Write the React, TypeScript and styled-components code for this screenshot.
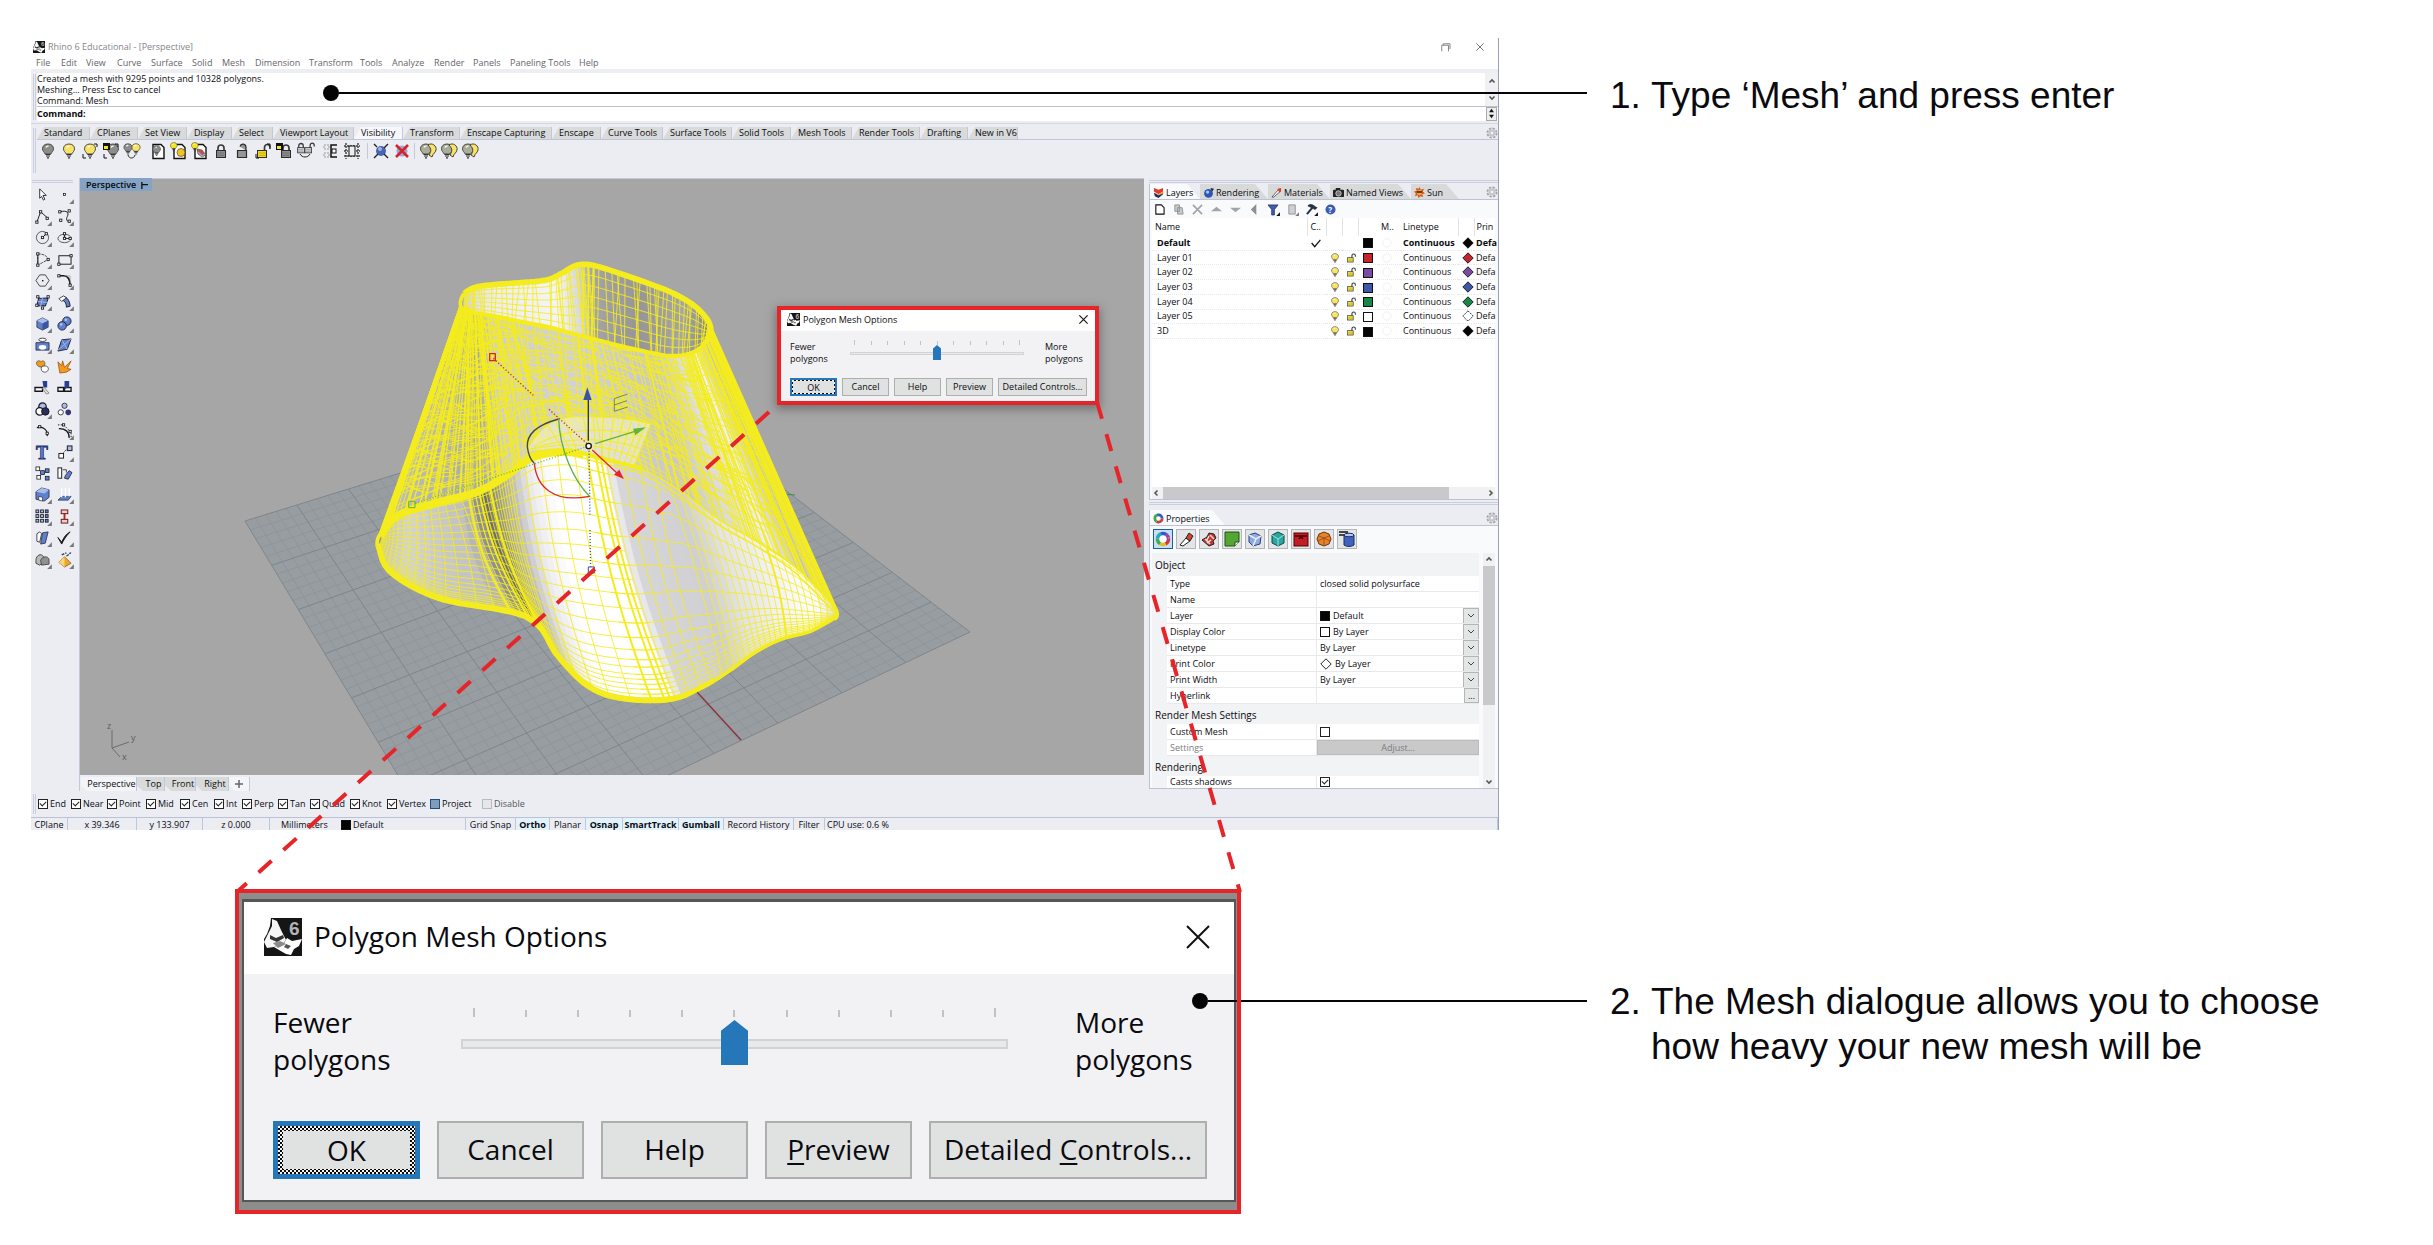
import React from "react";
import styled, { createGlobalStyle, css } from "styled-components";

const Global = createGlobalStyle`
  * { box-sizing: border-box; }
  body { margin: 0; background: #fff; color: #0a0a0f; font-family: "Open Sans", "Noto Sans", sans-serif; }
  button, input, select { font: inherit; color: inherit; margin: 0; }
  svg { display: block; }
`;

const RED = "#e5252a";
const LINE = "#bcc1d3";
const PANEL = "#ebedf3";
const YELLOW = "#f4ec1c";

/* ---------- page ---------- */

const Page = styled.main`
  position: relative;
  display: grid;
  grid-template-columns: minmax(0, 1468fr) minmax(0, 111fr) minmax(0, 792fr);
  grid-template-rows: auto auto;
  row-gap: 59px;
  padding: 38px 31px 29px;
`;

const Leader = styled.div<{ $row: number; $start: number; $top: number }>`
  grid-column: 1 / 3;
  grid-row: ${(p) => p.$row};
  align-self: start;
  z-index: 2;
  display: flex;
  align-items: center;
  margin: ${(p) => p.$top}px 23px 0 ${(p) => p.$start}px;
  pointer-events: none;
  &::before { content: ""; width: 16px; height: 16px; border-radius: 50%; background: #050505; }
  &::after { content: ""; flex: 1; height: 2px; background: #050505; }
`;

const Note = styled.section<{ $row: number; $top: number }>`
  grid-column: 3;
  grid-row: ${(p) => p.$row};
  display: grid;
  grid-template-columns: 41px minmax(0, 1fr);
  align-content: start;
  padding-top: ${(p) => p.$top}px;
  font-family: "Liberation Sans", Arial, sans-serif;
  font-size: 37px;
  line-height: 45px;
  p { margin: 0; max-width: 700px; }
`;

const Connectors = styled.svg`
  position: absolute;
  left: 0;
  top: 0;
  z-index: 3;
  pointer-events: none;
`;

/* ---------- application window ---------- */

const AppWindow = styled.section`
  grid-column: 1;
  grid-row: 1;
  display: flex;
  flex-direction: column;
  background: ${PANEL};
  font-size: 9px;
  line-height: 12px;
  white-space: nowrap;
  border-right: 1px solid #9ba1b5;
`;

const TitleBar = styled.header`
  display: flex;
  align-items: center;
  gap: 3px;
  height: 18px;
  padding: 0 10px 0 2px;
  background: #fff;
  color: #85858b;
  span { flex: 1; }
`;

const WindowButton = styled.button`
  width: 12px;
  height: 12px;
  margin-left: 20px;
  padding: 0;
  border: 0;
  background: none;
`;

const MenuBar = styled.nav`
  display: grid;
  grid-template-columns: 25px 25px 31px 34px 41px 30px 33px 54px 51px 32px 42px 39px 37px 69px auto;
  height: 17px;
  padding-left: 5px;
  background: #fff;
  border-bottom: 4px solid #eceef1;
  button { padding: 0; border: 0; background: none; text-align: left; color: #66646a; }
`;

const Grip = styled.div`
  width: 3px;
  margin: 1px 1px 1px 2px;
  border: solid #c9cede;
  border-width: 0 1px;
`;

const CommandArea = styled.div`
  display: flex;
  height: 51px;
  border-bottom: 1px solid #d3d7e4;
  padding-bottom: 2px;
`;

const CommandBody = styled.div`
  flex: 1;
  background: #fff;
`;

const History = styled.div`
  display: flex;
  height: 34px;
  line-height: 11px;
  border-bottom: 1px solid ${LINE};
  pre { flex: 1; margin: 0; font: inherit; }
`;

const ScrollColumn = styled.div`
  display: flex;
  flex-direction: column;
  justify-content: space-between;
  align-items: center;
  width: 13px;
  padding: 4px 0;
  background: #f1f1f3;
`;

const Prompt = styled.label`
  display: flex;
  align-items: center;
  height: 13px;
  font-weight: 700;
  input { flex: 1; height: 12px; border: 0; padding: 0 4px; outline: 0; background: none; }
`;

const Spinner = styled.span`
  display: grid;
  grid-template-rows: 6px 6px;
  place-items: center;
  width: 11px;
  margin-right: 1px;
  border: 1px solid #a9a9ad;
  background: #eee;
`;

const ToolArea = styled.div`
  display: flex;
  height: 54px;
  padding-top: 3px;
  padding-bottom: 4px;
`;

const ToolBody = styled.div`
  flex: 1;
`;

const TabStrip = styled.div`
  display: flex;
  height: 13px;
  border-bottom: 1px solid #bcc8da;
`;

const ToolTabs = styled.div`
  display: grid;
  flex: 1;
  grid-template-columns: 53px 48px 49px 45px 41px 81px 49px 57px 92px 49px 62px 69px 59px 61px 68px 48px 50px;
`;

const ToolTab = styled.button<{ $active?: boolean }>`
  padding: 0 0 0 7px;
  border: 0;
  border-right: 1px solid #c5c8d4;
  text-align: left;
  background: ${(p) => (p.$active ? "#f6f7fb" : "#d9dbdb")};
  clip-path: polygon(7px 0, 100% 0, 100% 100%, 0 100%);
`;

const IconBar = styled.div`
  display: flex;
  align-items: center;
  height: 22px;
`;

const IconGroup = styled.div<{ $rule?: boolean }>`
  display: flex;
  margin-right: 5px;
  ${(p) => p.$rule && css`
    margin-right: 2px;
    padding-left: 2px;
    border-left: 1px solid #c5c9d6;
  `}
`;

const IconButton = styled.button<{ $w: number }>`
  display: grid;
  place-items: center;
  width: ${(p) => p.$w}px;
  padding: 0;
  border: 0;
  background: none;
`;

const Workspace = styled.div`
  display: grid;
  grid-template-columns: 49px minmax(0, 1fr) 354px;
`;

const SideBar = styled.aside`
  padding: 2px 6px 0 1px;
  border-right: 1px solid #c3c7d8;
`;

const TopGrip = styled.div`
  height: 3px;
  margin-bottom: 1px;
  border: solid #c9cede;
  border-width: 1px 0;
`;

const SideTools = styled.div`
  display: grid;
  grid-template-columns: 22px 20px;
  grid-template-rows: repeat(18, 1fr);
  height: 386px;
`;

const ViewArea = styled.div`
  position: relative;
  min-width: 0;
`;

const Scene = styled.svg`
  width: 100%;
  height: 597px;
  border-top: 1px solid #c3c7d8;
  background: #a6a6a6;
`;

const ViewLabel = styled.button`
  position: absolute;
  left: 0;
  top: 0;
  display: flex;
  align-items: center;
  gap: 5px;
  height: 13px;
  padding: 1px 4px 0 6px;
  border: 0;
  background: #84a3c5;
  font-weight: 600;
`;

const FloatingDialog = styled.div`
  position: absolute;
  left: 697px;
  top: 128px;
  width: 322px;
  box-shadow: 0 3px 9px 1px rgba(60, 60, 60, 0.5);
`;

const ViewTabs = styled.div`
  display: grid;
  grid-template-columns: 56px 28px 31px 33px 21px;
  height: 16px;
  padding: 2px 0 0 1px;
`;

const ViewTab = styled.button<{ $active?: boolean }>`
  padding: 0 0 0 6px;
  border: 0;
  border-right: 1px solid #c5c8d4;
  text-align: center;
  background: ${(p) => (p.$active ? "#f4f5f9" : "#d9dbdb")};
  clip-path: polygon(0 0, 100% 0, 100% 100%, 6px 100%, 0 60%);
`;

const Snaps = styled.div`
  display: grid;
  grid-template-columns: 3px 33px 36px 39px 34px 34px 28px 36px 32px 40px 37px 43px 52px 50px;
  align-items: center;
  height: 26px;
  padding-left: 2px;
`;

const SnapGrip = styled.div`
  height: 20px;
  width: 3px;
  border: solid #c9cede;
  border-width: 0 1px;
`;

const SnapLabel = styled.label<{ $dim?: boolean }>`
  display: flex;
  align-items: center;
  gap: 2px;
  margin-left: 2px;
  color: ${(p) => (p.$dim ? "#55565c" : "#0a0a0f")};
`;

const Tick = styled.input<{ $fill?: string; $edge?: string }>`
  appearance: none;
  flex: none;
  width: 10px;
  height: 10px;
  border: 1px solid ${(p) => p.$edge || "#222"};
  background: ${(p) => p.$fill || "#fff"};
  &:checked::after {
    content: "";
    display: block;
    width: 5px;
    height: 3px;
    margin: 1px 0 0 1px;
    border: solid #222;
    border-width: 0 0 1px 1px;
    rotate: -45deg;
  }
`;

const Status = styled.footer`
  display: grid;
  grid-template-columns: 37px 69px 66px 67px 196px 50px 34px 36px 37px 56px 45px 70px 31px 1fr;
  border-top: 1px solid ${LINE};
`;

const StatusCell = styled.span<{ $on?: boolean; $left?: boolean }>`
  display: flex;
  align-items: center;
  gap: 2px;
  justify-content: ${(p) => (p.$left ? "flex-start" : "center")};
  padding: 1px 2px 0;
  border-right: 1px solid #bcc8e0;
  background: ${(p) => (p.$on ? "#e3f3fc" : "none")};
  font-weight: ${(p) => (p.$on ? 700 : 400)};
  line-height: 11px;
`;

const Swatch = styled.span<{ $c: string }>`
  display: inline-block;
  flex: none;
  width: 10px;
  height: 10px;
  border: 1px solid #111;
  background: ${(p) => p.$c};
  vertical-align: middle;
`;

const UnitCell = styled.span`
  width: 67px;
  padding-left: 9px;
`;

/* ---------- right panels ---------- */

const Panels = styled.aside`
  display: flex;
  flex-direction: column;
  padding: 2px 0 2px 5px;
`;

const Panel = styled.section<{ $grow?: boolean }>`
  display: flex;
  flex-direction: column;
  height: ${(p) => (p.$grow ? "auto" : "316px")};
  flex: ${(p) => (p.$grow ? "1" : "none")};
  min-height: 0;
  margin-top: ${(p) => (p.$grow ? 4 : 0)}px;
  margin-bottom: ${(p) => (p.$grow ? 0 : 2)}px;
  border-left: 1px solid ${LINE};
  border-bottom: 1px solid ${LINE};
  background: #f9fafc;
`;

const PanelTabs = styled.div<{ $cols: string }>`
  display: grid;
  grid-template-columns: ${(p) => p.$cols} 1fr 14px;
  align-items: stretch;
  height: 16px;
  border-bottom: 1px solid ${LINE};
  background: ${PANEL};
  > svg { align-self: center; justify-self: end; grid-column: -2; }
`;

const PanelTab = styled.button<{ $active?: boolean }>`
  display: flex;
  align-items: center;
  gap: 2px;
  padding: 2px 0 0 3px;
  border: 0;
  background: ${(p) => (p.$active ? "#f9fafc" : "#d8dada")};
  clip-path: polygon(0 0, calc(100% - 13px) 0, 100% 100%, 0 100%);
`;

const LayerTools = styled.div`
  display: grid;
  grid-template-columns: repeat(10, 19px);
  align-items: center;
  height: 18px;
`;

const TableWrap = styled.div`
  flex: 1;
  margin: 0 3px 0 2px;
  background: #fff;
`;

const LayerTable = styled.table`
  width: 100%;
  height: 121px;
  table-layout: fixed;
  border-collapse: collapse;
  th, td { padding: 0 0 0 3px; text-align: left; line-height: 12px; }
  th { height: 18px; font-weight: 400; border-left: 1px solid #e2e3e8; }
  th:first-child, th:nth-child(6), th:nth-child(7) { border-left: 0; }
  td { border-bottom: 1px dotted #e9e9ec; }
  td:first-child { padding-left: 5px; }
  th:last-child, td:last-child { padding-left: 2px; }
  tr.current td { font-weight: 700; }
  td:nth-child(5) { padding-left: 5px; }
  td svg { margin-left: 1px; }
`;

const HScroll = styled.div`
  display: grid;
  grid-template-columns: 11px 287fr 46fr;
  align-items: center;
  height: 12px;
  margin: 0 3px 0 2px;
  background: #f1f1f3;
  svg:last-child { justify-self: end; }
`;

const HThumb = styled.div`
  height: 12px;
  background: #c9c9cb;
`;

const PropIcons = styled.div`
  display: flex;
  gap: 3px;
  padding: 3px;
  height: 27px;
`;

const PropIcon = styled.button<{ $active?: boolean }>`
  display: grid;
  place-items: center;
  width: 20px;
  height: 20px;
  padding: 0;
  border: 1px solid ${(p) => (p.$active ? "#1a5fa0" : "#b4b5b8")};
  background: ${(p) => (p.$active ? "#c9dff2" : "#e4e5e6")};
`;

const PropBody = styled.div`
  display: flex;
  flex: 1;
  gap: 4px;
  height: 0;
  padding: 0 3px 0 2px;
`;

const PropList = styled.div`
  flex: 1;
  overflow: hidden;
  background: #f2f3f4;
`;

const PropHead = styled.h3<{ $h: number }>`
  margin: 0;
  padding-left: 3px;
  height: ${(p) => p.$h}px;
  font-size: 10px;
  font-weight: 400;
  line-height: ${(p) => p.$h + 2}px;
`;

const PropRow = styled.div<{ $dim?: boolean; $last?: boolean }>`
  display: grid;
  grid-template-columns: 149px minmax(0, 1fr);
  height: ${(p) => (p.$last ? 12 : 16)}px;
  margin-left: 15px;
  background: #fff;
  border-bottom: ${(p) => (p.$last ? 0 : 1)}px solid #e8e9ec;
  line-height: ${(p) => (p.$last ? 12 : 15)}px;
  color: ${(p) => (p.$dim ? "#7c7c80" : "inherit")};
  > label, > span:first-child { padding-left: 3px; }
`;

const PropValue = styled.span`
  position: relative;
  display: flex;
  align-items: center;
  gap: 3px;
  padding-left: 3px;
  border-left: 1px solid #e8e9ec;
  input[type="text"] { flex: 1; min-width: 0; height: 14px; padding: 0; border: 0; outline: 0; background: none; }
  select { flex: 1; appearance: none; height: 15px; padding: 0; border: 0; background: none; }
  select + svg { position: absolute; right: 0; top: 0; pointer-events: none; }
`;

const DotsButton = styled.button`
  width: 15px;
  height: 15px;
  padding: 0;
  border: 1px solid #b4b5b8;
  background: #e6e7e7;
  line-height: 9px;
`;

const AdjustButton = styled.button`
  flex: 1;
  height: 15px;
  margin-left: -3px;
  padding: 0;
  border: 1px solid #bcbcbe;
  background: #c9c9c9;
  color: #7c7c80;
  line-height: 12px;
`;

const VScroll = styled.div`
  display: flex;
  flex-direction: column;
  align-items: center;
  width: 12px;
  padding: 2px 0;
  background: #f1f1f3;
  div { width: 12px; height: 139px; margin: 3px 0 auto; background: #c9c9cb; }
`;

/* ---------- mesh dialog ---------- */

interface Size {
  font: number; line: number; titleH: number; titlePad: number; closePad: number; lift: number; titleGap: number; logo: number;
  padTop: number; padL: number; padR: number; padB: number; labelW: number; moreGap: number; moreW: number;
  ticksH: number; tickPad: number; tickW: number; tickH: number; tickGap: number; inputH: number;
  trackH: number; edge: number; thumbW: number; thumbH: number; thumbUp: number;
  btnTop: number; btnH: number; btnW: number; btnGap: number; ring: number; focus: number; closeSize: number; shade: string; outline: string;
}

const LARGE: Size = {
  font: 28, line: 37, titleH: 72, titlePad: 20, closePad: 24, lift: 3, titleGap: 12, logo: 38,
  padTop: 30, padL: 29, padR: 27, padB: 21, labelW: 188, moreGap: 67, moreW: 132,
  ticksH: 13, tickPad: 12, tickW: 2, tickH: 7, tickGap: 3, inputH: 48,
  trackH: 10, edge: 2, thumbW: 27, thumbH: 45, thumbUp: 21,
  btnTop: 43, btnH: 58, btnW: 147, btnGap: 17, ring: 5, focus: 5, closeSize: 24,
  shade: "6px 1px 8px 3px", outline: "3px 2px 2px",
};

const SMALL: Size = {
  font: 9, line: 12, titleH: 21, titlePad: 6, closePad: 7, lift: 2, titleGap: 3, logo: 13,
  padTop: 10, padL: 9, padR: 8, padB: 5, labelW: 60, moreGap: 21, moreW: 42,
  ticksH: 4, tickPad: 4, tickW: 1, tickH: 4, tickGap: 0, inputH: 17,
  trackH: 3, edge: 1, thumbW: 8, thumbH: 15, thumbUp: 8,
  btnTop: 13, btnH: 18, btnW: 47, btnGap: 5, ring: 2, focus: 1, closeSize: 9,
  shade: "0", outline: "0",
};

const Frame = styled.div`
  position: relative;
  padding: 4px;
  &::after {
    content: "";
    position: absolute;
    inset: 0;
    z-index: 3;
    border: 4px solid ${RED};
    pointer-events: none;
  }
`;

const Shade = styled.div<{ $s: Size }>`
  padding: ${(p) => p.$s.shade};
  background: #8d8d8c;
`;

const DialogBox = styled.div<{ $s: Size }>`
  border: solid #555657;
  border-width: ${(p) => p.$s.outline};
  background: #f2f2f4;
  font-size: ${(p) => p.$s.font}px;
  line-height: ${(p) => p.$s.line}px;
  white-space: nowrap;
`;

const DialogTitle = styled.header<{ $s: Size }>`
  display: flex;
  align-items: center;
  gap: ${(p) => p.$s.titleGap}px;
  height: ${(p) => p.$s.titleH}px;
  padding: 0 ${(p) => p.$s.closePad}px ${(p) => p.$s.lift}px ${(p) => p.$s.titlePad}px;
  background: #fff;
  span { flex: 1; }
  button { padding: 0; border: 0; background: none; }
`;

const DialogBody = styled.div<{ $s: Size }>`
  padding: ${(p) => `${p.$s.padTop}px ${p.$s.padR}px ${p.$s.padB}px ${p.$s.padL}px`};
`;

const SliderRow = styled.div<{ $s: Size }>`
  display: grid;
  grid-template-columns: ${(p) => p.$s.labelW}px minmax(0, 1fr) ${(p) => p.$s.moreW}px;
  label, > span { white-space: pre-line; }
  > div { margin-right: ${(p) => p.$s.moreGap}px; }
`;

const Ticks = styled.div<{ $s: Size }>`
  display: flex;
  justify-content: space-between;
  align-items: flex-end;
  height: ${(p) => p.$s.ticksH}px;
  margin-bottom: ${(p) => p.$s.tickGap}px;
  padding: 0 ${(p) => p.$s.tickPad}px;
  i { width: ${(p) => p.$s.tickW}px; height: ${(p) => p.$s.tickH}px; background: #c2c2c5; }
  i:first-child, i:last-child { height: ${(p) => p.$s.tickH + p.$s.edge}px; }
`;

const Range = styled.input<{ $s: Size }>`
  display: block;
  appearance: none;
  width: 100%;
  height: ${(p) => p.$s.inputH}px;
  background: none;
  &::-webkit-slider-runnable-track {
    height: ${(p) => p.$s.trackH}px;
    border: ${(p) => p.$s.edge}px solid #d2d3d5;
    background: #e8e9ea;
  }
  &::-webkit-slider-thumb {
    appearance: none;
    width: ${(p) => p.$s.thumbW}px;
    height: ${(p) => p.$s.thumbH}px;
    margin-top: -${(p) => p.$s.thumbUp}px;
    background: #2676ba;
    clip-path: polygon(50% 0, 100% 24%, 100% 100%, 0 100%, 0 24%);
  }
`;

const Buttons = styled.div<{ $s: Size }>`
  display: flex;
  gap: ${(p) => p.$s.btnGap}px;
  margin-top: ${(p) => p.$s.btnTop}px;
`;

const DialogButton = styled.button<{ $s: Size; $main?: boolean; $wide?: boolean }>`
  flex: ${(p) => (p.$wide ? "1" : "none")};
  width: ${(p) => p.$s.btnW}px;
  height: ${(p) => p.$s.btnH}px;
  padding: 0 0 ${(p) => p.$s.lift}px;
  border: ${(p) => p.$s.edge}px solid #adaeae;
  background: #e0e2e1;
  line-height: 1;
  u { text-underline-offset: 3px; text-decoration-thickness: 2px; }
  ${(p) => p.$main && css`
    border: ${p.$s.ring}px solid #2676ba;
    padding: ${p.$s.focus}px;
    background:
      linear-gradient(#e0e2e1, #e0e2e1) content-box,
      repeating-conic-gradient(#0a0a0a 0 25%, #f4f4f4 0 50%) 0 0 / 4px 4px padding-box;
  `}
`;

const Magnified = styled.section`
  grid-column: 1;
  grid-row: 2;
  width: 1006px;
  margin-left: 204px;
`;

/* ---------- drawings ---------- */

const Rhino = ({ size }: { size: number }) => (
  <svg width={size} height={size} viewBox="0 0 38 38" aria-hidden="true">
    <rect width="38" height="38" fill="#151515" />
    <path d="M0 0h7l-1 8-3 8-3 5z" fill="#fff" />
    <path d="M8 1l5 2 4 9 3 6 2 4-4 5-8 2-7 1-3-6 4-8 4-8z" fill="#f6f6f6" />
    <path d="M19 27l4-7 5 3 10-2-3 7-5 3-3 6-5-1-7-4-5-3z" fill="#fff" />
    <path d="M6 17l6 3 7-3 1 3-7 4-7-3z" fill="#333" />
    <path d="M9 25l7-2 6 3-8 4z" fill="#8a8a8a" />
    <path d="M22 26l5 2-3 3-4-2z" fill="#555" />
    <text x="25" y="17" fontSize="19" fontWeight="700" fill="#b4b4b4" fontFamily="Liberation Sans, sans-serif">6</text>
  </svg>
);

const Cross = ({ size, color = "#111" }: { size: number; color?: string }) => (
  <svg width={size} height={size} viewBox="0 0 24 24" aria-hidden="true">
    <path d="M1 1l22 22M23 1L1 23" stroke={color} strokeWidth={size > 12 ? 2 : 3} />
  </svg>
);

const Chevron = ({ dir, color = "#555" }: { dir: "up" | "down" | "left" | "right"; color?: string }) => {
  const turn = { up: 0, right: 90, down: 180, left: 270 }[dir];
  return (
    <svg width="8" height="8" viewBox="0 0 8 8" aria-hidden="true">
      <path d="M1.500 5.500L4 3l2.500 2.500" transform={`rotate(${turn} 4 4)`} fill="none" stroke={color} strokeWidth="1.600" />
    </svg>
  );
};

const Gear = () => (
  <svg width="12" height="12" viewBox="0 0 12 12" aria-hidden="true">
    <circle cx="6" cy="6" r="4.600" fill="none" stroke="#a5a6aa" strokeWidth="1.800" strokeDasharray="2.400 1.200" />
    <circle cx="6" cy="6" r="3.600" fill="#c6c7ca" />
    <circle cx="6" cy="6" r="1.300" fill="#f5f5f7" />
  </svg>
);

const bulbPath = "M8 1c-3.500 0-5.500 2-5.500 4.800 0 2.400 1.900 3.400 2.700 5.200h5.600c.8-1.800 2.700-2.800 2.700-5.200C13.500 3 11.500 1 8 1z";
const Bulb = ({ c, x = 0, y = 0, k = 1 }: { c: string; x?: number; y?: number; k?: number }) => (
  <g transform={`translate(${x} ${y}) scale(${k})`}>
    <path d={bulbPath} fill={c} stroke="#4e4a3c" strokeWidth="1" />
    <path d="M6 4.500c.5-1 1.500-1.500 2.500-1.300" stroke="#fff" strokeWidth="1.400" fill="none" />
    <path d="M5.500 11.500h5M6 13h4M7 14.800h2" stroke="#333" strokeWidth="1.200" />
  </g>
);
const Lock = ({ c, open, x = 0, y = 0, k = 1 }: { c: string; open?: boolean; x?: number; y?: number; k?: number }) => (
  <g transform={`translate(${x} ${y}) scale(${k})`}>
    <path d={open ? "M9.500 8V4.500c0-4 5.500-4 5.500 0V6" : "M5 8V5c0-4 6-4 6 0v3"} fill="none" stroke="#3a3a3a" strokeWidth="1.700" />
    <rect x={open ? 2.5 : 3.5} y="7.500" width="9" height="7" fill={c} stroke="#2b2b2b" />
    <path d="M4 10h7M4 12.300h7" stroke="#0003" />
  </g>
);
const Corners = () => <path d="M1 11v4h3M12 1h3v3" fill="none" stroke="#111" />;
const Doc = () => <path d="M3 1.500h8l3 3v11H3z" fill="#fff" stroke="#111" strokeWidth="1.400" />;

const GOLD = "#f8e268";
const GREY = "#8b8d8c";

const toolIcons: React.ReactNode[][] = [
  [
    <Bulb c={GREY} />,
    <Bulb c={GOLD} />,
    <><Bulb c={GOLD} /><Corners /></>,
    <><Bulb c={GREY} x={2} /><rect x="0" y="0" width="7" height="7" fill="#111" /><rect x="1" y="3" width="4" height="3" fill="#f5e61a" /><Corners /></>,
    <><Bulb c={GREY} x={-2} k={0.75} /><Bulb c={GOLD} x={6} k={0.75} /><path d="M4 12c1 4 6 4 7 0" fill="none" stroke="#222" /></>,
  ],
  [
    <><Doc /><Bulb c={GREY} x={1} y={2} k={0.7} /></>,
    <><Doc /><Bulb c="#f5e61a" x={-2} y={-1} k={0.6} /><circle cx="10" cy="9.500" r="4" fill="#efc22e" stroke="#5b4a10" strokeWidth=".7" /></>,
    <><Doc /><Bulb c="#f5e61a" x={-2} y={-1} k={0.6} /><path d="M5 6l5 1 4 5-4 2-4-3z" fill="#c6504a" stroke="#552" strokeWidth=".7" /><path d="M6 9l4 4 3-2" stroke="#8fa8e0" fill="none" strokeWidth="1.500" /></>,
    <Lock c={GREY} />,
    <path d="M3.500 7.500h9v7h-9zM6 3.500C7 0 12 .5 12 4.500v3" fill={GREY} fillOpacity=".9" stroke="#2b2b2b" strokeWidth="1.200" />,
    <><Lock c="#f5d81e" open /><Corners /></>,
    <><Lock c={GREY} x={2} /><rect width="7" height="7" fill="#111" /><rect x="1" y="3" width="4" height="3" fill="#f5e61a" /></>,
    <><Lock c="#c9cbca" x={-2} y={-1} k={0.75} /><Lock c="#c9cbca" open x={6} y={-1} k={0.75} /><path d="M3 11c2 4 8 4 10 0" fill="none" stroke="#222" /></>,
  ],
  [
    <><path d="M1 2h5v4H1zM1 10h5v4H1z" fill="none" stroke="#999" strokeDasharray="2 1" /><path d="M14 2H8v12h6" fill="none" stroke="#111" strokeWidth="1.500" /><rect x="9" y="6" width="4" height="4" fill="#fff" stroke="#111" /></>,
    <><path d="M0 3h16M0 13h16M2 0v16M14 0v16M0 8h4M12 8h4" stroke="#444" strokeDasharray="2 1" strokeWidth="1.500" /><rect x="5" y="3" width="6" height="10" fill="#eee" stroke="#111" /></>,
  ],
  [
    <><circle cx="8" cy="8" r="5" fill="#4964b0" /><circle cx="7" cy="6" r="2" fill="#9db0e6" /><path d="M1 15l4-4M15 1l-4 4M1 1l3 3M15 15l-4-4" stroke="#222" strokeWidth="1.400" /></>,
    <><circle cx="8" cy="8" r="5.500" fill="#9aa8d6" /><path d="M2 2l12 12M14 2L2 14" stroke="#d6222a" strokeWidth="2.600" /></>,
  ],
  [0, 1, 2].map((n) => (
    <React.Fragment key={n}><Bulb c="#a9ad9a" x={-2} k={1} /><path d="M8 2c4-3 9 1 8 5-.5 3-3 3-4 7l-3-2c2-3 3-6-1-10z" fill={GOLD} stroke="#333" strokeWidth=".9" /></React.Fragment>
  )),
];

const BLUE = "#5f7fcf";
const PALE = "#a9bcea";
const INK = "#16161c";
const dot = (x: number, y: number) => <rect x={x - 1.2} y={y - 1.2} width="2.400" height="2.400" fill="#fff" stroke={INK} strokeWidth=".9" />;

const sideIcons: [React.ReactNode, boolean][] = [
  [<path d="M5 2l7 7H8.500l2 4-1.500 1-2-4-2 2z" fill="#fff" stroke={INK} strokeWidth=".9" />, false],
  [<rect x="7" y="7" width="2" height="2" fill="#fff" stroke={INK} strokeWidth=".8" />, true],
  [<><path d="M2 14L6 3l8 7" fill="none" stroke={INK} />{dot(2, 14)}{dot(6, 3)}{dot(13, 10)}</>, true],
  [<><path d="M3 3c8-2 10 1 8 5s0 5 3 6" fill="none" stroke={INK} />{dot(3, 3)}{dot(13, 2)}{dot(4, 12)}{dot(13, 13)}</>, true],
  [<><circle cx="8" cy="8" r="6.500" fill="none" stroke="#555" /><path d="M8 8l4-4" stroke={INK} />{dot(8, 8)}{dot(12, 4)}</>, true],
  [<><ellipse cx="8" cy="9" rx="7" ry="4.500" fill="none" stroke="#555" /><path d="M8 9V4M8 9h6" stroke={INK} />{dot(8, 9)}{dot(8, 4)}{dot(14, 9)}</>, true],
  [<><path d="M3 2c6 0 10 2 11 6L3 14z" fill="none" stroke="#444" strokeDasharray="3 1" /><path d="M3 2v12" stroke={INK} />{dot(3, 2)}{dot(3, 14)}{dot(14, 8)}</>, true],
  [<><rect x="2" y="4" width="13" height="9" fill="none" stroke={INK} />{dot(2, 13)}{dot(15, 4)}</>, true],
  [<><path d="M5 2h6l4 6-4 6H5L1 8z" fill="none" stroke="#444" /><rect x="7.500" y="7.500" width="1.500" height="1.500" /></>, true],
  [<><path d="M2 3h5c5 0 7 4 7 11" fill="none" stroke={INK} strokeWidth="1.700" />{dot(2, 3)}<path d="M8 3h6v6" fill="none" stroke="#888" strokeWidth=".6" />{dot(14, 13)}</>, true],
  [<><path d="M4 4c3 2 6-1 10 1l-3 8c-4-2-6 1-9-1z" fill={BLUE} stroke={INK} /><path d="M8 4l-2 9M3 8l10 1" stroke={PALE} />{dot(3, 3)}{dot(14, 3)}{dot(2, 12)}{dot(8, 15)}</>, true],
  [<><path d="M4 6c3-5 9-3 10 7l-4 1c0-5-2-7-6-8z" fill={BLUE} stroke={INK} /><path d="M2 5l5-3 3 2-5 4z" fill="#fff" stroke={INK} strokeWidth=".8" /></>, true],
  [<><path d="M2 5l6-3 6 3v7l-6 3-6-3z" fill={BLUE} stroke="#233" strokeWidth=".8" /><path d="M2 5l6 3 6-3-6-3z" fill={PALE} /><path d="M8 8v7l6-3V5z" fill="#3b559f" /></>, true],
  [<><circle cx="10.500" cy="5.500" r="4.500" fill={BLUE} stroke="#223" /><circle cx="5.500" cy="10.500" r="4.500" fill={BLUE} stroke="#223" /><circle cx="4.500" cy="9" r="1.500" fill={PALE} /><circle cx="9.500" cy="4" r="1.500" fill={PALE} /></>, true],
  [<><path d="M1 6h14v8H1z" fill={BLUE} stroke="#223" strokeWidth=".8" /><ellipse cx="8" cy="3" rx="4" ry="1.800" fill="#fff" stroke={INK} strokeWidth=".8" /><ellipse cx="8" cy="11" rx="4" ry="2.500" fill="#fff" /></>, true],
  [<><path d="M5 3l10-1-4 11-10 2z" fill={BLUE} stroke="#223" /><path d="M5 3l3 5M15 2L8 8l3 5M8 8l-7 6" stroke={PALE} fill="none" /></>, true],
  [<><path d="M2 3c2-3 4 1 6-1 3 0 3 3 2 5s-4 2-6 1-3-3-2-5z" fill="#f39a1c" stroke="#553" strokeWidth=".8" /><path d="M7 8c3-1 5-1 7 1 1 3-1 5-4 5s-4-3-3-6z" fill="#fff" stroke="#333" strokeWidth=".8" /></>, false],
  [<path d="M1 3l4 4 1-5 2 7 7-7-4 8 4 1-5 3-7 1z" fill="#f39a1c" stroke="#9a4d0c" strokeWidth=".8" />, false],
  [<><path d="M0 8h8v4H0z" fill="#fff" stroke={INK} strokeWidth="1.400" /><path d="M8 1h5v7H9z" fill="#27408f" /><path d="M10 8l5 6-3 1-4-6z" fill="#ddd" stroke="#777" strokeWidth=".8" /></>, false],
  [<><path d="M1 8h6v4H1zM8 8h7v4H8z" fill="#fff" stroke={INK} strokeWidth="1.400" /><path d="M8 1h5v6l-5 3z" fill="#27408f" /></>, false],
  [<><circle cx="8" cy="5" r="4" fill={PALE} stroke={INK} strokeWidth="1.300" /><circle cx="5" cy="10" r="4" fill="#fff" stroke={INK} strokeWidth="1.300" /><circle cx="11" cy="10" r="4" fill="#2b2b5c" stroke={INK} /></>, true],
  [<><circle cx="8" cy="4" r="2.800" fill={PALE} stroke={INK} strokeWidth=".8" /><circle cx="4" cy="11" r="2.800" fill="#fff" stroke={INK} strokeWidth=".8" /><circle cx="12" cy="11" r="3" fill="#33337a" /></>, false],
  [<><path d="M2 5c7-2 12 3 11 9" fill="none" stroke={INK} strokeWidth="1.300" />{dot(5, 4)}{dot(13, 11)}</>, false],
  [<><path d="M2 6c7 0 11 3 11 10" fill="none" stroke={INK} strokeWidth="1.300" /><path d="M1 2h6l8 8v5" fill="none" stroke={INK} strokeDasharray="1.500 1.500" />{dot(7, 2)}{dot(14, 9)}</>, true],
  [<text x="1" y="15" fontSize="19" fontWeight="700" fontFamily="Liberation Serif, serif" fill={BLUE} stroke="#24376e" strokeWidth=".9">T</text>, false],
  [<><rect x="2" y="9" width="5" height="5" fill="#fff" stroke={INK} /><rect x="11" y="1" width="5" height="5" fill={PALE} stroke={INK} /><path d="M7 8l4-4" stroke={INK} strokeDasharray="1.500 1" /></>, true],
  [<>{[[1, 1], [6, 5], [11, 3], [2, 10], [11, 11]].map(([x, y]) => <rect key={`${x}-${y}`} x={x} y={y} width="4" height="4" fill={x > 3 ? BLUE : "#fff"} stroke={INK} strokeWidth=".8" />)}</>, false],
  [<><rect x="1" y="2" width="4" height="11" fill="#fff" stroke={INK} /><path d="M9 10l4-5 3 2-4 7-4-1z" fill={BLUE} stroke={INK} strokeWidth=".8" /><path d="M6 4h4v3" fill="none" stroke={INK} strokeWidth=".8" /></>, false],
  [<><path d="M1 5l6-4 8 2v8l-5 4-9-2z" fill={BLUE} stroke="#223" strokeWidth=".8" /><path d="M1 5l6-4 8 2-5 4z" fill={PALE} /><path d="M4 10l4 1v4l-4-1z" fill="#fff" stroke={INK} strokeWidth=".6" /></>, true],
  [<><path d="M1 14l4-4h10l-3 4z" fill={BLUE} stroke="#223" strokeWidth=".7" /><path d="M5 1v10M9 1v10M13 1v9" stroke="#fff" strokeWidth="1.400" /></>, true],
  [<>{[1, 6, 11].flatMap((y) => [1, 6, 11].map((x) => <rect key={`${x}-${y}`} x={x} y={y} width="3" height="3" fill={x === 11 ? BLUE : PALE} stroke={INK} strokeWidth=".9" />))}</>, true],
  [<><path d="M8 4v9" stroke="#b22" strokeWidth="2" /><rect x="4.500" y="1" width="7" height="4" fill="#f1caca" stroke="#611" /><rect x="4.500" y="11" width="7" height="4" fill="#f1caca" stroke="#611" /></>, true],
  [<><path d="M2 4l3-2 2 2-2 9-3-1z" fill="#fff" stroke={INK} strokeWidth=".8" /><path d="M8 3l6-1-3 12-5 1z" fill={BLUE} stroke="#223" strokeWidth=".8" /></>, true],
  [<path d="M1 8l4 5C7 8 10 4 14 2 9 7 7 11 5 15z" fill={INK} stroke={INK} />, true],
  [<><path d="M1 9c0-6 6-8 8-4v6l-4 3-4-2z" fill="#b7b8b8" stroke="#444" /><path d="M6 9c2-5 8-5 9-1v5l-8 1z" fill="#8f9190" stroke="#333" strokeWidth=".8" /></>, true],
  [<><path d="M8 5l7 7-7 4-6-5z" fill="#f0a52c" stroke="#6b4a10" strokeWidth=".7" /><path d="M8 5v11l-6-5z" fill="#f9d67a" /><path d="M5 3l5-2M10 4c3 0 2-3 5-3" fill="none" stroke="#445" strokeWidth="1.500" strokeDasharray="3 1" /></>, true],
];

/* ---------- scene geometry ---------- */

type P = [number, number];

const spline = (pts: P[], t: number): P => {
  const n = pts.length - 1;
  const f = Math.min(Math.max(t, 0), 0.9999) * n;
  const i = Math.floor(f);
  const u = f - i;
  const a = pts[Math.max(i - 1, 0)], b = pts[i], c = pts[i + 1], d = pts[Math.min(i + 2, n)];
  const h = (k: 0 | 1) =>
    0.5 * (2 * b[k] + (c[k] - a[k]) * u + (2 * a[k] - 5 * b[k] + 4 * c[k] - d[k]) * u * u + (3 * b[k] - a[k] - 3 * c[k] + d[k]) * u * u * u);
  return [h(0), h(1)];
};
const mix = (a: P, b: P, s: number): P => [a[0] + (b[0] - a[0]) * s, a[1] + (b[1] - a[1]) * s];
const pt = (p: P) => `${p[0].toFixed(1)} ${p[1].toFixed(1)}`;
const poly = (ps: P[]) => "M" + ps.map(pt).join("L");
const range = (n: number) => Array.from({ length: n + 1 }, (_, i) => i / n);
const curve = (pts: P[], n = 70) => range(n).map((t) => spline(pts, t));

const TOP: P[] = [[302, 160], [308, 172], [322, 182], [342, 188], [390, 198], [470, 213], [560, 232], [680, 262], [760, 284], [860, 306], [930, 318], [990, 311], [1030, 285], [1052, 240]];
const BASE: P[] = [[62, 850], [110, 792], [220, 755], [350, 720], [440, 670], [520, 615], [620, 600], [720, 625], [850, 660], [960, 722], [1080, 810], [1200, 880], [1310, 955], [1424, 1070]];
const FOOT: P[] = [[52, 890], [90, 970], [240, 1050], [500, 1105], [590, 1220], [680, 1310], [780, 1348], [930, 1352], [1030, 1312], [1110, 1262], [1190, 1205], [1265, 1168], [1350, 1145], [1424, 1105]];
const REAR: P[] = [[312, 130], [345, 112], [400, 104], [480, 98], [560, 90], [605, 70], [650, 46], [700, 46], [790, 74], [870, 102], [940, 130], [1000, 165], [1042, 208], [1054, 240]];
const RIMF: P[] = [[310, 172], [345, 188], [400, 198], [480, 215], [560, 230], [620, 246], [670, 260], [710, 270], [790, 290], [870, 308], [930, 318], [990, 311], [1030, 285], [1052, 240]];

let seed = 7;
const rnd = () => {
  seed = (seed * 16807) % 2147483647;
  return seed / 2147483647;
};

const upperFine = (() => {
  const out: string[] = [];
  for (let i = 0; i < 104; i++) {
    const t = i / 104 + (rnd() - 0.5) * 0.01;
    out.push(poly([spline(TOP, t), spline(BASE, t + (rnd() - 0.5) * 0.04)]));
  }
  for (let i = 0; i < 54; i++) {
    const t = rnd() * 0.42;
    out.push(poly([spline(TOP, t * 0.9), spline(BASE, t + (rnd() - 0.5) * 0.09)]));
  }
  for (let i = 0; i < 40; i++) {
    const t = 0.82 + rnd() * 0.18;
    out.push(poly([spline(TOP, t), spline(BASE, t + (rnd() - 0.5) * 0.06)]));
  }
  for (let k = 1; k < 46; k++) {
    const s = k / 46;
    if (k % 3 === 0) out.push(poly(range(60).map((t) => mix(spline(TOP, t), spline(BASE, t), s + 0.02 * Math.sin(t * 14 + k)))));
    else out.push(poly(range(30).map((v) => mix(spline(TOP, v * 0.34), spline(BASE, v * 0.34), s + 0.02 * Math.sin(v * 9 + k)))));
  }
  for (let i = 0; i < 600; i++) {
    const t = Math.pow(rnd(), 1.4) * 0.92, s = rnd() * 0.9;
    const a = mix(spline(TOP, t), spline(BASE, t), s);
    const b = mix(spline(TOP, t + 0.05), spline(BASE, t + 0.05), s + (rnd() - 0.3) * 0.12);
    out.push(poly([a, b]));
  }
  return out.join("");
})();

const upperBold = [0.06, 0.2, 0.24, 0.27, 0.52, 0.55, 0.69, 0.93, 0.97].map((t) => poly([spline(TOP, t), spline(BASE, t)])).join("");

const wall = (t: number, s: number): P => {
  const p = mix(spline(BASE, t), spline(FOOT, t), s);
  const bow = Math.sin(Math.PI * s);
  return [p[0] - (t < 0.65 && t > 0.2 ? 22 * bow : -8 * bow), p[1]];
};
const lowerFine = (() => {
  const out: string[] = [];
  const cols = [
    ...range(18).map((v) => v * 0.24),
    ...range(14).map((v) => 0.22 + v * 0.1),
    0.36, 0.4, 0.44, 0.48, 0.51, 0.55, 0.58, 0.61, 0.64, 0.67,
    ...range(20).map((v) => 0.69 + v * 0.31),
  ];
  cols.forEach((t) => out.push(poly(range(16).map((s) => wall(t, s)))));
  const rows = [0.06, 0.12, 0.18, 0.25, 0.32, 0.38, 0.44, 0.5, 0.56, 0.62, 0.68, 0.74, 0.79, 0.83, 0.86, 0.89, 0.91, 0.93, 0.95, 0.97, 0.985];
  rows.forEach((s, i) => {
    out.push(poly(range(40).map((v) => wall(v * 0.55, s))));
    if (i % 2 === 0 || i > 10) out.push(poly(range(40).map((v) => wall(0.5 + v * 0.5, s))));
  });
  return out.join("");
})();
const lowerBold = [0.215, 0.235, 0.26, 0.51, 0.53, 0.54, 0.86].map((t) => poly(range(16).map((s) => wall(t, s)))).join("");

const mouthFine = (() => {
  const out: string[] = [];
  for (let i = 0; i < 84; i++) {
    const t = i / 84 + (rnd() - 0.5) * 0.012;
    if (rnd() > 0.2) out.push(poly([spline(REAR, t), spline(RIMF, t + (rnd() - 0.5) * 0.03)]));
  }
  for (let k = 1; k < 7; k++) out.push(poly(range(50).map((t) => mix(spline(REAR, t), spline(RIMF, t), k / 7))));
  return out.join("");
})();

const strips = (a: P[], b: P[], shade: (t: number) => number, bent?: boolean) =>
  Array.from({ length: 64 }, (_, i) => {
    const t0 = i / 64, t1 = (i + 1.15) / 64;
    const g = Math.round(shade(t0));
    const d = bent
      ? poly([...range(10).map((s) => wall(t0, s)), ...range(10).reverse().map((s) => wall(t1, s))])
      : poly([spline(a, t0), spline(a, t1), spline(b, t1), spline(b, t0)]);
    return <path key={i} d={d + "Z"} fill={`rgb(${g},${g},${Math.min(g + 3, 255)})`} />;
  });

const ramp = (stops: [number, number][]) => (t: number) => {
  for (let i = 1; i < stops.length; i++) {
    if (t <= stops[i][0]) {
      const [t0, v0] = stops[i - 1], [t1, v1] = stops[i];
      return v0 + ((v1 - v0) * (t - t0)) / (t1 - t0);
    }
  }
  return stops[stops.length - 1][1];
};
const upperShade = ramp([[0, 195], [0.15, 178], [0.24, 168], [0.3, 208], [0.5, 210], [0.7, 200], [0.86, 240], [0.93, 195], [1, 205]]);
const lowerShade = ramp([[0, 190], [0.1, 212], [0.2, 190], [0.235, 105], [0.28, 165], [0.36, 235], [0.42, 255], [0.53, 255], [0.56, 214], [0.68, 208], [0.75, 228], [0.87, 246], [0.93, 255], [1, 215]]);
const mouthShade = ramp([[0, 210], [0.15, 238], [0.35, 245], [0.46, 215], [0.52, 165], [0.65, 150], [0.8, 165], [0.9, 140], [1, 90]]);

const gA: P = [245, 521], gB: P = [659, 393], gC: P = [970, 632], gD: P = [458, 875];
const ground = (major: boolean) =>
  Array.from({ length: 41 }, (_, i) => i)
    .filter((i) => (i % 5 === 0) === major)
    .map((i) => {
      const s = i / 40;
      return poly([mix(gA, gB, s), mix(gD, gC, s)]) + poly([mix(gA, gD, s), mix(gB, gC, s)]);
    })
    .join("");

const Model = () => (
  <Scene viewBox="80 179 1064 596" preserveAspectRatio="xMinYMin slice" role="img" aria-label="Perspective viewport">
    <path d={poly([gA, gB, gC, gD]) + "Z"} fill="#979da1" />
    <path d={ground(false)} stroke="#8f9599" strokeWidth="1" fill="none" />
    <path d={ground(true)} stroke="#7f868b" strokeWidth="1" fill="none" />
    <path d="M697 692l44 48" stroke="#8d3440" strokeWidth="1.500" />
    <path d="M785 494l10 1" stroke="#3f8f50" strokeWidth="1" />
    <g transform="translate(360 250) scale(.3333)" fill="none" strokeLinejoin="round">
      {strips(REAR, RIMF, mouthShade)}
      {strips(TOP, BASE, upperShade)}
      {strips(BASE, FOOT, lowerShade, true)}
      <path d={mouthFine} stroke={YELLOW} strokeWidth="2.600" />
      <path d="M685 50v215M670 60v195M700 55l-5 205" stroke={YELLOW} strokeWidth="5" />
      <path d={upperFine} stroke={YELLOW} strokeWidth="2.700" />
      <path d={upperBold} stroke={YELLOW} strokeWidth="6" />
      <path d={lowerFine} stroke={YELLOW} strokeWidth="2.500" />
      <path d={lowerBold} stroke={YELLOW} strokeWidth="6" />
      <path d="M500 605C540 520 600 500 650 500S800 500 872 522L820 655C740 610 600 585 500 605z" fill="#ececee" fillOpacity=".55" />
      <path
        d="M500 605C540 520 600 500 650 500S800 500 872 522L820 655M520 590C620 530 740 530 850 560M510 598C620 560 740 560 838 595M506 600C610 575 740 580 830 625M560 520L610 600M585 510L630 600M610 502L650 600M670 500L690 610M700 502L708 615M730 503L725 622M760 505L745 628M790 508L760 632M815 512L775 640M840 515L790 645M858 520L805 650M590 480L620 440 700 440M700 440l30 190"
        stroke={YELLOW}
        strokeWidth="3"
      />
      <path d={poly(curve(REAR))} stroke={YELLOW} strokeWidth="17" />
      <path d={poly(curve(RIMF))} stroke={YELLOW} strokeWidth="13" />
      <path d={poly(curve(BASE))} stroke={YELLOW} strokeWidth="5" />
      <path d={poly(curve(BASE).slice(30).map(([x, y]): P => [x - 6, y + 12]))} stroke={YELLOW} strokeWidth="4" />
      <path d={poly(curve(BASE).slice(0, 44))} stroke={YELLOW} strokeWidth="12" />
      <path d={poly(curve(BASE).slice(0, 36).map(([x, y]): P => [x + 2, y + 10]))} stroke={YELLOW} strokeWidth="16" />
      <path d={poly(curve(FOOT))} stroke={YELLOW} strokeWidth="10" />
      <path d={poly(curve(FOOT).slice(0, 46).map(([x, y]): P => [x + 4, y - 8]))} stroke={YELLOW} strokeWidth="9" />
      <path d="M312 130C298 150 300 160 304 180L62 850M52 890Q48 865 64 848M1054 238L1424 1070Q1440 1095 1424 1108" stroke={YELLOW} strokeWidth="11" />

      <path d="M400 325L520 436M567 478L680 580" stroke="#c23a28" strokeWidth="4" strokeDasharray="4 6" />
      <path d="M166 760L680 590" stroke="#6bb33e" strokeWidth="4" strokeDasharray="3 6" />
      <path d="M687 602L690 795M690 840L692 950" stroke="#3a4ea5" strokeWidth="4" strokeDasharray="3 6" />
      <rect x="389" y="311" width="17" height="21" stroke="#d8261f" strokeWidth="4" />
      <rect x="146" y="754" width="19" height="19" stroke="#63b53a" strokeWidth="3" />
      <rect x="685" y="951" width="18" height="18" stroke="#34489d" strokeWidth="3" />
      <path d="M596 507C530 525 500 555 502 590Q506 625 523 640" stroke="#3f4850" strokeWidth="4" />
      <path d="M596 507C600 600 640 690 688 738" stroke="#5fb142" strokeWidth="4" />
      <path d="M523 640C530 710 580 760 688 739" stroke="#d92a2c" strokeWidth="4" />
      <path d="M685 572V445" stroke="#2c3350" strokeWidth="4" />
      <path d="M682 412l13 38h-25z" fill="#3c50a4" />
      <path d="M706 581L825 544" stroke="#63b53a" strokeWidth="4" />
      <path d="M858 532l-32 24-7-20z" fill="#63b53a" />
      <path d="M697 600L770 668" stroke="#e5252a" strokeWidth="4" />
      <path d="M792 687l-30-13 16-15z" fill="#e5252a" />
      <circle cx="686" cy="588" r="8" fill="#fff" stroke="#111" strokeWidth="4" />
      <path d="M803 432L763 446V484L803 471M763 465L801 452" stroke="#7f8a3c" strokeWidth="3" />
    </g>
    <g stroke="#6c6c6c" fill="none">
      <path d="M112 730v18l17-6M112 748l8 9" />
    </g>
    <g fontSize="9" fill="#5c5c5c">
      <text x="107" y="729">z</text>
      <text x="131" y="741">y</text>
      <text x="122" y="760">x</text>
    </g>
  </Scene>
);

/* ---------- data ---------- */

const menus = ["File", "Edit", "View", "Curve", "Surface", "Solid", "Mesh", "Dimension", "Transform", "Tools", "Analyze", "Render", "Panels", "Paneling Tools", "Help"];
const toolTabs = ["Standard", "CPlanes", "Set View", "Display", "Select", "Viewport Layout", "Visibility", "Transform", "Enscape Capturing", "Enscape", "Curve Tools", "Surface Tools", "Solid Tools", "Mesh Tools", "Render Tools", "Drafting", "New in V6"];
const snaps = ["End", "Near", "Point", "Mid", "Cen", "Int", "Perp", "Tan", "Quad", "Knot", "Vertex"];
const layers: [string, string][] = [
  ["Default", "#050505"], ["Layer 01", "#c4242b"], ["Layer 02", "#7a4ba0"], ["Layer 03", "#3d56a6"],
  ["Layer 04", "#1a8549"], ["Layer 05", "#ffffff"], ["3D", "#050505"],
];

const tabIcons: Record<string, React.ReactNode> = {
  Layers: <><path d="M1 1l5 2 5-2v4L6 8 1 5z" fill="#e5392c" /><path d="M1 6l5 3 5-3v2l-5 4-4-2z" fill="#1d2c66" /><path d="M2 6l4 2 5-3v2L6 9z" fill="#f6a02a" /></>,
  Rendering: <><circle cx="6" cy="7" r="4.800" fill="#2d55b8" /><circle cx="5" cy="5.500" r="1.800" fill="#a9c2f2" /><path d="M8 1l4 1-2 3z" fill="#222" /></>,
  Materials: <><path d="M1 11l7-8 2 2-7 6z" fill="#fff" stroke="#333" strokeWidth=".8" /><path d="M7 2l4-1v4l-2 1z" fill="#d0432c" /></>,
  "Named Views": <><rect x="0" y="3" width="12" height="8" rx="1" fill="#222" /><path d="M3 1h5v3H3z" fill="#222" /><circle cx="6" cy="7" r="3" fill="#777" stroke="#eee" strokeWidth=".7" /></>,
  Sun: <><path d="M6 0l1.500 3L11 2 9.500 5 12 7 9 8l1 3-3-1-2 2-1-3-3 1 1-3-2-2 3-1-1-3 3 1z" fill="#d9541c" /><circle cx="6" cy="6" r="3" fill="#f7a41f" /><path d="M3 5.500h6" stroke="#222" strokeWidth="1.500" /></>,
  Properties: <><circle cx="6" cy="6" r="4" fill="none" stroke="#d43a3a" strokeWidth="3" strokeDasharray="8.400 16.800" /><circle cx="6" cy="6" r="4" fill="none" stroke="#3fae49" strokeWidth="3" strokeDasharray="8.400 16.800" strokeDashoffset="-8.400" /><circle cx="6" cy="6" r="4" fill="none" stroke="#3557c4" strokeWidth="3" strokeDasharray="8.400 16.800" strokeDashoffset="-16.800" /></>,
};

const layerIcons: React.ReactNode[] = [
  <path d="M2 1h6l3 3v7H2z" fill="#fff" stroke="#111" strokeWidth="1.200" />,
  <path d="M2 1h5v7H2zM5 4h5l1 7H5z" fill="#c9cacb" stroke="#8e9092" />,
  <path d="M1 1l10 10M11 1L1 11" stroke="#a2a4a7" strokeWidth="1.800" />,
  <path d="M0 8l6-5 6 5z" fill="#a2a4a7" />,
  <path d="M0 4l6 5 6-5z" fill="#a2a4a7" />,
  <path d="M8 0L2 6l6 6z" fill="#8b8e92" />,
  <><path d="M0 1h11L7 6v6H4V6z" fill="#3c5db0" stroke="#222e57" strokeWidth=".8" /><path d="M13 9v4H9z" /></>,
  <><path d="M2 1h7v10H2z" fill="#cfd0d2" stroke="#8e9092" /><path d="M13 9v4H9z" fill="#777" /></>,
  <><path d="M2 2c2-2 5-2 8 1l2 1-2 2-2-1z" fill="#26324e" stroke="#222" strokeWidth=".8" /><path d="M7 4L1 11" stroke="#26324e" strokeWidth="2.200" /><path d="M13 9v4H9z" /></>,
  <><circle cx="6" cy="6" r="5.500" fill="#3b5cb4" /><text x="3.500" y="9.500" fontSize="9" fontWeight="700" fill="#fff">?</text></>,
];

const propIcons: React.ReactNode[] = [
  <>{["#d43a3a", "#e9b92d", "#3fae49", "#2ea7c4", "#3557c4", "#a03fb0"].map((c, i) => <circle key={c} cx="8" cy="8" r="5.500" fill="none" stroke={c} strokeWidth="3.500" strokeDasharray="5.800 28.800" strokeDashoffset={-5.76 * i} />)}<circle cx="8" cy="8" r="3.500" fill="#fff" /></>,
  <><path d="M2 14l6-7 4 3-7 5z" fill="#fff" stroke="#222" /><path d="M8 7l3-5 4 3-3 5z" fill="#d0432c" stroke="#222" /></>,
  <><path d="M1 9l5-3 2-4 5 1 2 4-3 3 1 3-5 2z" fill="#c9352f" stroke="#222" /><path d="M4 8l5 5M9 4l4 4M10 9l-4 3M8 5l-2 4" stroke="#f6dcdc" strokeWidth="1.500" /></>,
  <><path d="M1 1h14v10l-4 4H1z" fill="#52a733" stroke="#274d1a" /><path d="M15 11h-4v4" fill="#fff" stroke="#274d1a" /></>,
  <><path d="M2 4l6-2 6 3-1 8-7 2-4-4z" fill="#8fabe4" stroke="#2b3f77" /><path d="M2 4l7 4 5-3M9 8l-3 7" stroke="#e9effc" fill="none" strokeWidth="1.500" /></>,
  <><path d="M2 4l6-3 6 3v8l-6 3-6-3z" fill="#2aa6a1" stroke="#0d4745" /><path d="M2 4l6 4 6-4M8 8v7" stroke="#9be3df" fill="none" /></>,
  <><rect x="1" y="2" width="14" height="13" fill="#c01d26" stroke="#500" /><path d="M2 5h12M6 8c1-2 3-2 4 0" stroke="#400" fill="none" strokeWidth="1.500" /></>,
  <><path d="M8 1l5 2 2 5-2 5-5 2-5-2-2-5 2-5z" fill="#e8822a" stroke="#6a360c" /><path d="M3 5l5 2 5-2M8 7v7M2 10l6-3 6 3" stroke="#8d4a14" fill="none" strokeWidth=".8" /></>,
  <><path d="M0 1h9M0 4h5" stroke="#111" strokeWidth="1.300" /><path d="M5 4h10v10c-3 2-7 2-10 0z" fill="#3f62bd" stroke="#1d2e62" /><ellipse cx="10" cy="4" rx="5" ry="1.800" fill="#b7c8f0" stroke="#1d2e62" /></>,
];

const Diamond = ({ c }: { c: string }) => (
  <svg width="12" height="12" viewBox="0 0 12 12" aria-hidden="true">
    <path d="M6 .800L11.200 6 6 11.200.800 6z" fill={c} stroke="#111" strokeDasharray={c === "#ffffff" ? "2 1" : undefined} strokeWidth=".9" />
  </svg>
);

const Icon = ({ size = 16, box = 16, children }: { size?: number; box?: number; children: React.ReactNode }) => (
  <svg width={size} height={size} viewBox={`0 0 ${box} ${box}`} overflow="visible" fill="#111" aria-hidden="true">{children}</svg>
);

const MeshDialog = ({ s, id, large }: { s: Size; id: string; large?: boolean }) => (
  <Frame>
    <Shade $s={s}>
      <DialogBox $s={s} role="dialog" aria-labelledby={`${id}-title`}>
        <DialogTitle $s={s}>
          <Rhino size={s.logo} />
          <span id={`${id}-title`}>Polygon Mesh Options</span>
          <button aria-label="Close"><Cross size={s.closeSize} /></button>
        </DialogTitle>
        <DialogBody $s={s}>
          <SliderRow $s={s}>
            <label htmlFor={`${id}-density`}>{"Fewer\npolygons"}</label>
            <div>
              <Ticks $s={s}>{Array.from({ length: 11 }, (_, i) => <i key={i} />)}</Ticks>
              <Range $s={s} id={`${id}-density`} type="range" min="0" max="100" defaultValue="50" />
            </div>
            <span>{"More\npolygons"}</span>
          </SliderRow>
          <Buttons $s={s}>
            <DialogButton $s={s} $main>OK</DialogButton>
            <DialogButton $s={s}>Cancel</DialogButton>
            <DialogButton $s={s}>Help</DialogButton>
            <DialogButton $s={s}>{large ? <><u>P</u>review</> : "Preview"}</DialogButton>
            <DialogButton $s={s} $wide>{large ? <>Detailed <u>C</u>ontrols...</> : "Detailed Controls..."}</DialogButton>
          </Buttons>
        </DialogBody>
      </DialogBox>
    </Shade>
  </Frame>
);

const DropArrow = () => (
  <svg width="16" height="15" viewBox="0 0 16 15" aria-hidden="true">
    <rect x=".5" y=".5" width="15" height="15" fill="#e4e5e5" stroke="#b4b5b8" />
    <path d="M5 6l3 3 3-3" fill="none" stroke="#444" />
  </svg>
);

const DropRow = ({ id, label, value, mark }: { id: string; label: string; value: string; mark?: React.ReactNode }) => (
  <PropRow>
    <label htmlFor={id}>{label}</label>
    <PropValue>
      {mark}
      <select id={id} defaultValue={value}><option>{value}</option></select>
      <DropArrow />
    </PropValue>
  </PropRow>
);

const LayersPanel = () => (
  <Panel>
    <PanelTabs $cols="50px 68px 62px 81px 48px">
      {["Layers", "Rendering", "Materials", "Named Views", "Sun"].map((t, i) => (
        <PanelTab key={t} $active={i === 0}><Icon size={11} box={12}>{tabIcons[t]}</Icon>{t}</PanelTab>
      ))}
      <Gear />
    </PanelTabs>
    <LayerTools>
      {layerIcons.map((n, i) => <IconButton key={i} $w={19} aria-label={`Layer tool ${i + 1}`}><Icon size={11} box={12}>{n}</Icon></IconButton>)}
    </LayerTools>
    <TableWrap>
      <LayerTable>
        <colgroup>
          <col />
          {[19, 16, 16, 20, 22, 58, 16, 21].map((w, i) => <col key={i} width={w} />)}
        </colgroup>
        <thead>
          <tr><th>Name</th><th>C..</th><th /><th /><th /><th>M..</th><th>Linetype</th><th /><th>Prin</th></tr>
        </thead>
        <tbody>
          {layers.map(([name, c], i) => (
            <tr key={name} className={i === 0 ? "current" : undefined}>
              <td>{name}</td>
              <td>{i === 0 && <Icon size={10} box={16}><path d="M1 8l5 6L15 3" fill="none" stroke="#111" strokeWidth="2" /></Icon>}</td>
              <td>{i > 0 && <Icon size={10}><Bulb c={GOLD} /></Icon>}</td>
              <td>{i > 0 && <Icon size={10}><Lock c="#f0dc3c" open /></Icon>}</td>
              <td><Swatch $c={c} /></td>
              <td><Icon size={10} box={12}><circle cx="6" cy="6" r="5" fill="#fff" stroke="#ededf0" /></Icon></td>
              <td>Continuous</td>
              <td><Diamond c={c} /></td>
              <td>Defa</td>
            </tr>
          ))}
        </tbody>
      </LayerTable>
    </TableWrap>
    <HScroll><Chevron dir="left" /><HThumb /><Chevron dir="right" /></HScroll>
  </Panel>
);

const PropertiesPanel = () => (
  <Panel $grow>
    <PanelTabs $cols="75px">
      <PanelTab $active><Icon size={11} box={12}>{tabIcons.Properties}</Icon>Properties</PanelTab>
      <Gear />
    </PanelTabs>
    <PropIcons>
      {propIcons.map((n, i) => <PropIcon key={i} $active={i === 0} aria-label={`Property page ${i + 1}`}><Icon>{n}</Icon></PropIcon>)}
    </PropIcons>
    <PropBody>
      <PropList>
        <PropHead $h={23}>Object</PropHead>
        <PropRow><span>Type</span><PropValue>closed solid polysurface</PropValue></PropRow>
        <PropRow><label htmlFor="p-name">Name</label><PropValue><input id="p-name" type="text" /></PropValue></PropRow>
        <DropRow id="p-layer" label="Layer" value="Default" mark={<Swatch $c="#050505" />} />
        <DropRow id="p-color" label="Display Color" value="By Layer" mark={<Swatch $c="#fff" />} />
        <DropRow id="p-line" label="Linetype" value="By Layer" />
        <DropRow id="p-pcolor" label="Print Color" value="By Layer" mark={<Diamond c="#fff" />} />
        <DropRow id="p-pwidth" label="Print Width" value="By Layer" />
        <PropRow><label htmlFor="p-link">Hyperlink</label><PropValue><input id="p-link" type="text" /><DotsButton>...</DotsButton></PropValue></PropRow>
        <PropHead $h={20}>Render Mesh Settings</PropHead>
        <PropRow><label htmlFor="p-mesh">Custom Mesh</label><PropValue><Tick id="p-mesh" type="checkbox" /></PropValue></PropRow>
        <PropRow $dim><span>Settings</span><PropValue><AdjustButton>Adjust...</AdjustButton></PropValue></PropRow>
        <PropHead $h={20}>Rendering</PropHead>
        <PropRow $last><label htmlFor="p-shadow">Casts shadows</label><PropValue><Tick id="p-shadow" type="checkbox" defaultChecked /></PropValue></PropRow>
      </PropList>
      <VScroll><Chevron dir="up" /><div /><Chevron dir="down" /></VScroll>
    </PropBody>
  </Panel>
);

const RhinoWindow = () => (
  <AppWindow>
    <TitleBar>
      <Rhino size={12} />
      <span>Rhino 6 Educational - [Perspective]</span>
      <WindowButton aria-label="Restore"><Icon size={9} box={12}><path d="M1 11V3h9v8M3 3V1h9v7" fill="none" stroke="#777" strokeWidth="1.200" /></Icon></WindowButton>
      <WindowButton aria-label="Close"><Cross size={8} color="#777" /></WindowButton>
    </TitleBar>
    <MenuBar>{menus.map((m) => <button key={m}>{m}</button>)}</MenuBar>
    <CommandArea>
      <Grip />
      <CommandBody>
        <History>
          <pre>{"Created a mesh with 9295 points and 10328 polygons.\nMeshing... Press Esc to cancel\nCommand: Mesh"}</pre>
          <ScrollColumn><Chevron dir="up" /><Chevron dir="down" /></ScrollColumn>
        </History>
        <Prompt>Command:<input type="text" /><Spinner><Icon size={5} box={6}><path d="M0 5l3-4 3 4z" /></Icon><Icon size={5} box={6}><path d="M0 1l3 4 3-4z" /></Icon></Spinner></Prompt>
      </CommandBody>
    </CommandArea>
    <ToolArea>
      <Grip />
      <ToolBody>
        <TabStrip>
          <ToolTabs>{toolTabs.map((t) => <ToolTab key={t} $active={t === "Visibility"}>{t}</ToolTab>)}</ToolTabs>
          <Gear />
        </TabStrip>
        <IconBar>
          {toolIcons.map((g, gi) => (
            <IconGroup key={gi} $rule={gi > 2}>
              {g.map((n, i) => <IconButton key={i} $w={21} aria-label={`Visibility tool ${gi + 1}.${i + 1}`}><Icon>{n}</Icon></IconButton>)}
            </IconGroup>
          ))}
        </IconBar>
      </ToolBody>
    </ToolArea>
    <Workspace>
      <SideBar>
        <TopGrip />
        <SideTools>
          {sideIcons.map(([n, more], i) => (
            <IconButton key={i} $w={20} aria-label={`Tool ${i + 1}`}>
              <Icon size={15}>{n}{more && <path d="M18 13v5h-5z" fill="#77797c" />}</Icon>
            </IconButton>
          ))}
        </SideTools>
      </SideBar>
      <ViewArea>
        <Model />
        <ViewLabel>Perspective <Icon size={7} box={8}><path d="M1 0v8M1 3h7" stroke="#111" strokeWidth="1.500" /></Icon></ViewLabel>
        <ViewTabs>
          <ViewTab $active>Perspective</ViewTab>
          <ViewTab>Top</ViewTab>
          <ViewTab>Front</ViewTab>
          <ViewTab>Right</ViewTab>
          <ViewTab $active aria-label="Add viewport"><Icon size={8} box={8}><path d="M4 0v8M0 4h8" stroke="#666" strokeWidth="1.500" /></Icon></ViewTab>
        </ViewTabs>
        <FloatingDialog><MeshDialog s={SMALL} id="mesh-small" /></FloatingDialog>
      </ViewArea>
      <Panels>
        <TopGrip />
        <LayersPanel />
        <TopGrip />
        <PropertiesPanel />
      </Panels>
    </Workspace>
    <Snaps>
      <SnapGrip />
      {snaps.map((s) => <SnapLabel key={s}><Tick type="checkbox" defaultChecked />{s}</SnapLabel>)}
      <SnapLabel><Tick type="checkbox" $fill="#7f9dbb" $edge="#1d4f86" />Project</SnapLabel>
      <SnapLabel $dim><Tick type="checkbox" $fill="#e6e7e8" $edge="#b9babd" />Disable</SnapLabel>
    </Snaps>
    <Status>
      <StatusCell>CPlane</StatusCell>
      <StatusCell>x 39.346</StatusCell>
      <StatusCell>y 133.907</StatusCell>
      <StatusCell>z 0.000</StatusCell>
      <StatusCell $left><UnitCell>Millimeters</UnitCell><Swatch $c="#050505" />Default</StatusCell>
      <StatusCell>Grid Snap</StatusCell>
      <StatusCell $on>Ortho</StatusCell>
      <StatusCell>Planar</StatusCell>
      <StatusCell $on>Osnap</StatusCell>
      <StatusCell $on>SmartTrack</StatusCell>
      <StatusCell $on>Gumball</StatusCell>
      <StatusCell>Record History</StatusCell>
      <StatusCell>Filter</StatusCell>
      <StatusCell $left>CPU use: 0.6 %</StatusCell>
    </Status>
  </AppWindow>
);

export default function App() {
  return (
    <>
      <Global />
      <Page>
        <RhinoWindow />
        <Leader $row={1} $start={292} $top={47} />
        <Note $row={1} $top={35}><span>1.</span><p>Type ‘Mesh’ and press enter</p></Note>
        <Magnified><MeshDialog s={LARGE} id="mesh-large" large /></Magnified>
        <Leader $row={2} $start={1161} $top={104} />
        <Note $row={2} $top={90}><span>2.</span><p>The Mesh dialogue allows you to choose how heavy your new mesh will be</p></Note>
        <Connectors width="1300" height="900" viewBox="0 0 1300 900" aria-hidden="true">
          <path d="M769 412L237 892" stroke={RED} strokeWidth="4" strokeDasharray="17.500 16" />
          <path d="M1097 402L1240 892" stroke={RED} strokeWidth="4" strokeDasharray="17.500 16" />
        </Connectors>
      </Page>
    </>
  );
}
